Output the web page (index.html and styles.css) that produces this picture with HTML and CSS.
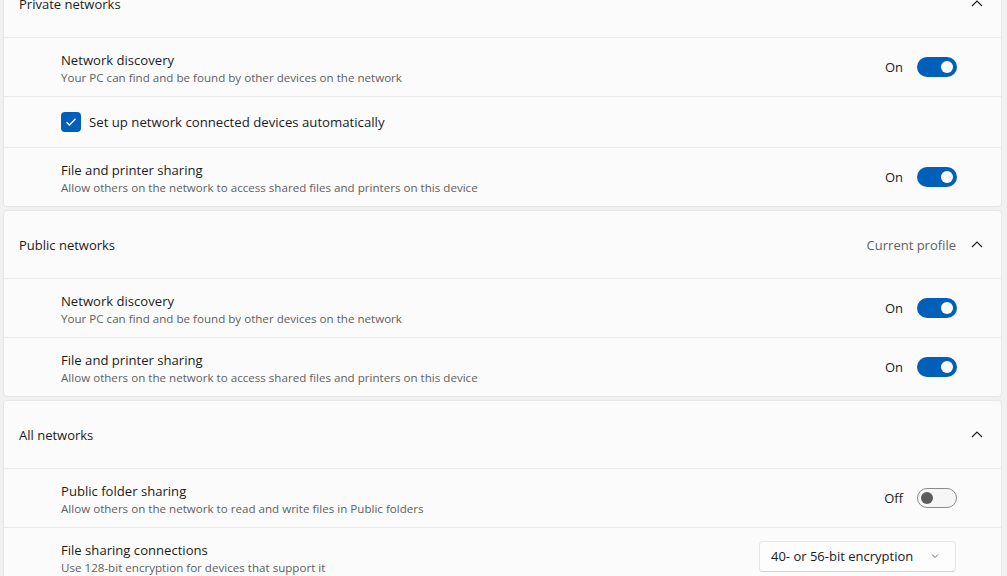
FILE: index.html
```html
<!DOCTYPE html>
<html lang="en">
<head>
<meta charset="utf-8">
<title>Advanced sharing settings</title>
<link rel="stylesheet" href="styles.css">
</head>
<body>
<div class="page">
  <section class="card first">
    <div class="head">
      <span class="head-title">Private networks</span>
      <span class="head-right">
        <svg class="chev" width="12" height="8" viewBox="0 0 12 8"><polyline points="1,7 6,2 11,7" fill="none" stroke="#1b1b1b" stroke-width="1.1"/></svg>
      </span>
    </div>
    <div class="row">
      <div class="text">
        <div class="title">Network discovery</div>
        <div class="sub">Your PC can find and be found by other devices on the network</div>
      </div>
      <div class="ctrl"><span class="state">On</span><span class="toggle on"><span class="knob"></span></span></div>
    </div>
    <div class="row check-row">
      <span class="checkbox">
        <svg width="12" height="10" viewBox="0 0 12 10"><polyline points="1.5,5.2 4.5,8 10.5,1.8" fill="none" stroke="#fff" stroke-width="1.3"/></svg>
      </span>
      <span class="check-label">Set up network connected devices automatically</span>
    </div>
    <div class="row">
      <div class="text">
        <div class="title">File and printer sharing</div>
        <div class="sub">Allow others on the network to access shared files and printers on this device</div>
      </div>
      <div class="ctrl"><span class="state">On</span><span class="toggle on"><span class="knob"></span></span></div>
    </div>
  </section>

  <section class="card">
    <div class="head">
      <span class="head-title">Public networks</span>
      <span class="head-right">
        <span class="profile">Current profile</span>
        <svg class="chev" width="12" height="8" viewBox="0 0 12 8"><polyline points="1,7 6,2 11,7" fill="none" stroke="#1b1b1b" stroke-width="1.1"/></svg>
      </span>
    </div>
    <div class="row">
      <div class="text">
        <div class="title">Network discovery</div>
        <div class="sub">Your PC can find and be found by other devices on the network</div>
      </div>
      <div class="ctrl"><span class="state">On</span><span class="toggle on"><span class="knob"></span></span></div>
    </div>
    <div class="row">
      <div class="text">
        <div class="title">File and printer sharing</div>
        <div class="sub">Allow others on the network to access shared files and printers on this device</div>
      </div>
      <div class="ctrl"><span class="state">On</span><span class="toggle on"><span class="knob"></span></span></div>
    </div>
  </section>

  <section class="card">
    <div class="head">
      <span class="head-title">All networks</span>
      <span class="head-right">
        <svg class="chev" width="12" height="8" viewBox="0 0 12 8"><polyline points="1,7 6,2 11,7" fill="none" stroke="#1b1b1b" stroke-width="1.1"/></svg>
      </span>
    </div>
    <div class="row">
      <div class="text">
        <div class="title">Public folder sharing</div>
        <div class="sub">Allow others on the network to read and write files in Public folders</div>
      </div>
      <div class="ctrl"><span class="state">Off</span><span class="toggle off"><span class="knob"></span></span></div>
    </div>
    <div class="row">
      <div class="text">
        <div class="title">File sharing connections</div>
        <div class="sub">Use 128-bit encryption for devices that support it</div>
      </div>
      <div class="ctrl">
        <span class="dropdown">
          <span class="dd-text">40- or 56-bit encryption</span>
          <svg width="8" height="6" viewBox="0 0 8 6"><polyline points="1,1.5 4,4.5 7,1.5" fill="none" stroke="#6b6b6b" stroke-width="1"/></svg>
        </span>
      </div>
    </div>
  </section>
</div>
</body>
</html>
```

FILE: styles.css
```css
html, body {
  margin: 0;
  padding: 0;
}
body {
  background: #f1f1f1;
  font-family: "Open Sans", "Noto Sans", "Liberation Sans", sans-serif;
  color: #1b1b1b;
  overflow: hidden;
  height: 576px;
}
.page {
  display: flex;
  flex-direction: column;
  gap: 3px;
  padding: 0 5px 0 3px;
  margin-top: -31px;
}
.card {
  background: #fbfbfb;
  border: 1px solid #e6e6e6;
  border-radius: 4px;
  display: flex;
  flex-direction: column;
}
.head {
  height: 67px;
  border-bottom: 1px solid #ebebeb;
  display: flex;
  align-items: center;
  justify-content: space-between;
  padding: 0 18px 0 15px;
  font-size: 13px;
}
.head-right {
  display: flex;
  align-items: center;
  gap: 15px;
}
.profile {
  color: #616161;
}
.chev {
  display: block;
  margin-top: -1px;
}
.row {
  height: 58px;
  display: flex;
  align-items: center;
  justify-content: space-between;
  padding: 0 44px 0 57px;
  border-bottom: 1px solid #ebebeb;
}
.card .row:last-child {
  border-bottom: none;
}
.check-row {
  height: 50px;
  justify-content: flex-start;
  gap: 8px;
}
.text {
  display: flex;
  flex-direction: column;
  margin-top: 2px;
}
.title {
  font-size: 13.1px;
  line-height: 19px;
}
.sub {
  font-size: 11.6px;
  line-height: 16px;
  color: #616161;
}
.ctrl {
  display: flex;
  align-items: center;
  gap: 14px;
}
.state {
  font-size: 13px;
}
.toggle {
  width: 40px;
  height: 20px;
  box-sizing: border-box;
  border-radius: 10px;
  display: flex;
  align-items: center;
  padding: 0 4px;
}
.toggle.on {
  background: #005fb8;
  justify-content: flex-end;
}
.toggle.off {
  border: 1px solid #8a8a8a;
  background: #f6f6f6;
  justify-content: flex-start;
  padding: 0 3px;
}
.knob {
  width: 12px;
  height: 12px;
  border-radius: 50%;
}
.toggle.on .knob {
  background: #ffffff;
}
.toggle.off .knob {
  background: #5d5d5d;
}
.checkbox {
  width: 20px;
  height: 20px;
  border-radius: 4px;
  background: #005fb8;
  display: flex;
  align-items: center;
  justify-content: center;
}
.check-label {
  font-size: 13.2px;
}
.dropdown {
  width: 197px;
  height: 31px;
  box-sizing: border-box;
  border: 1px solid #e5e5e5;
  border-bottom-color: #d4d4d4;
  border-radius: 4px;
  background: #fdfdfd;
  display: flex;
  align-items: center;
  justify-content: space-between;
  padding: 0 16px 0 11px;
  font-size: 13px;
  margin: -2px 1px 0 0;
}
```
